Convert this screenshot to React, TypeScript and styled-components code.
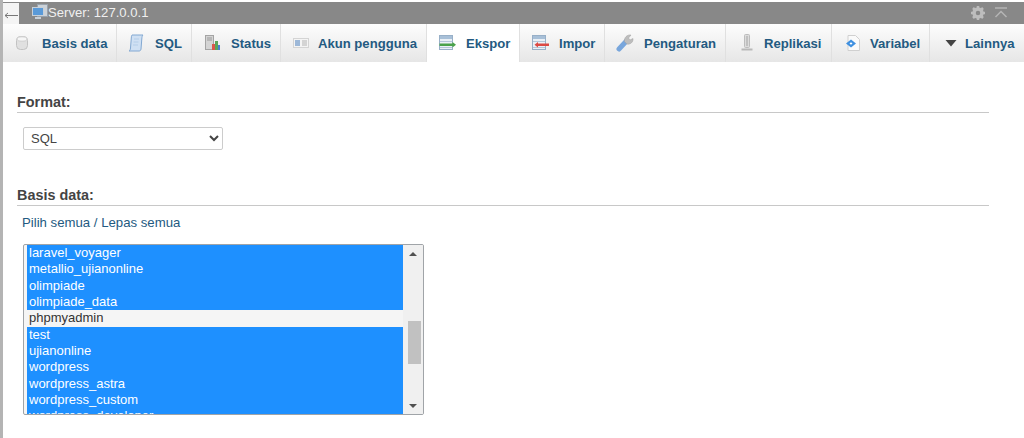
import React from "react";
import styled, { createGlobalStyle } from "styled-components";

const GlobalStyle = createGlobalStyle`
  html, body {
    margin: 0;
    padding: 0;
    background: #fff;
    overflow: hidden;
  }
  body {
    font-family: "Liberation Sans", Arial, sans-serif;
    color: #444;
  }
`;

const DbIcon = () => (
  <svg width="16" height="16" viewBox="0 0 16 16">
    <rect x="2.500" y="1.500" width="11" height="13" rx="4" fill="#e0e0e0" stroke="#c2c2c2" />
    <ellipse cx="8" cy="4" rx="5" ry="2.200" fill="#f6f6f6" stroke="#cfcfcf" />
  </svg>
);

const SqlIcon = () => (
  <svg width="18" height="18" viewBox="0 0 18 18">
    <path d="M5 1h11c-1 1-1 2-1.200 4L14 15c-.2 1.500-1 2-2 2H2c1-.5 1.400-1.500 1.500-3L4.300 4C4.400 2.500 4.500 1.800 5 1z" fill="#cfe0f3" stroke="#82a8d2" />
    <path d="M7 5h5M6.500 8h5M6 11h5" stroke="#b4cde8" />
  </svg>
);

const StatusIcon = () => (
  <svg width="18" height="18" viewBox="0 0 18 18">
    <rect x="2.500" y="1.500" width="8" height="14" fill="#d4d4d4" stroke="#a4a4a4" />
    <path d="M4 4h5M4 6h5" stroke="#9a9a9a" />
    <rect x="9" y="10" width="3" height="6" fill="#d8584c" />
    <rect x="12" y="7" width="3" height="9" fill="#5aa65a" />
    <rect x="15" y="11" width="2" height="5" fill="#4a7fd0" />
  </svg>
);

const UsersIcon = () => (
  <svg width="16" height="16" viewBox="0 0 16 16">
    <rect x="0.500" y="3.500" width="15" height="9" fill="#f4f4f4" stroke="#d4d4d4" />
    <rect x="2" y="5" width="5" height="6" fill="#9db8d8" />
    <path d="M9 6h5M9 8h5M9 10h5" stroke="#b4b4b4" />
  </svg>
);

const ExportIcon = () => (
  <svg width="18" height="16" viewBox="0 0 18 16">
    <rect x="1.500" y="0.500" width="13" height="14" fill="#eaf0f6" stroke="#98b0c8" />
    <rect x="2" y="1" width="12" height="3" fill="#a8c0d8" />
    <path d="M2 6.500h12M2 12.500h12" stroke="#b4c6d8" />
    <rect x="1.500" y="8.500" width="13.500" height="2.500" fill="#4aa24a" />
    <path d="M14.500 7l3.500 2.700-3.500 2.800z" fill="#4aa24a" />
  </svg>
);

const ImportIcon = () => (
  <svg width="18" height="16" viewBox="0 0 18 16">
    <rect x="1.500" y="0.500" width="13" height="14" fill="#eaf0f6" stroke="#98b0c8" />
    <rect x="2" y="1" width="12" height="3" fill="#a8c0d8" />
    <path d="M2 6.500h12M2 12.500h12" stroke="#b4c6d8" />
    <rect x="6" y="8.500" width="12" height="2.500" fill="#dc4a44" />
    <path d="M7 7l-3.500 2.700 3.500 2.800z" fill="#dc4a44" />
  </svg>
);

const WrenchIcon = () => (
  <svg width="18" height="18" viewBox="0 0 18 18">
    <path d="M3 15l7-7.500" stroke="#78a6dc" strokeWidth="5" strokeLinecap="round" />
    <path d="M8.500 7.500C8 3.500 11 .5 15 1l-2.500 3 1.500 2 3-1.500c.5 3.500-3 6.500-6 5.500z" fill="#bdbdbd" stroke="#a0a0a0" strokeWidth="0.500" />
  </svg>
);

const ReplicationIcon = () => (
  <svg width="14" height="18" viewBox="0 0 14 18">
    <rect x="4.500" y="0.500" width="5" height="13" rx="1" fill="#dcdcdc" stroke="#bcbcbc" />
    <path d="M7 2v10" stroke="#a4a4a4" />
    <path d="M1.500 15.500h11" stroke="#b8b8b8" strokeWidth="2" />
  </svg>
);

const VariableIcon = () => (
  <svg width="16" height="18" viewBox="0 0 16 18">
    <path d="M3 1.500h7.500l4 4v11H3z" fill="#fafafa" stroke="#d0d0d0" />
    <path d="M1 9.500L6 5.500l5 4-5 4z" fill="#3f90e0" />
    <path d="M4.500 9.500L6 8.200l1.500 1.300L6 10.800z" fill="#fff" />
  </svg>
);

const CaretIcon = () => (
  <svg width="12" height="8" viewBox="0 0 12 8">
    <path d="M0.500 1h11L6 7.500z" fill="#444" />
  </svg>
);

const tabs = [
  { label: "Basis data", icon: <DbIcon />, width: 114, gap: 12, pad: 11 },
  { label: "SQL", icon: <SqlIcon />, width: 75, gap: 10, pad: 10 },
  { label: "Status", icon: <StatusIcon />, width: 89, gap: 10, pad: 11 },
  { label: "Akun pengguna", icon: <UsersIcon />, width: 146, gap: 9, pad: 12 },
  { label: "Ekspor", icon: <ExportIcon />, width: 93, gap: 10, pad: 11, active: true },
  { label: "Impor", icon: <ImportIcon />, width: 85, gap: 10, pad: 11 },
  { label: "Pengaturan", icon: <WrenchIcon />, width: 121, gap: 10, pad: 11 },
  { label: "Replikasi", icon: <ReplicationIcon />, width: 106, gap: 10, pad: 14 },
  { label: "Variabel", icon: <VariableIcon />, width: 98, gap: 9, pad: 13 },
  { label: "Lainnya", icon: <CaretIcon />, width: 92, gap: 8, pad: 15 },
];

const databases = [
  "laravel_voyager",
  "metallio_ujianonline",
  "olimpiade",
  "olimpiade_data",
  "phpmyadmin",
  "test",
  "ujianonline",
  "wordpress",
  "wordpress_astra",
  "wordpress_custom",
  "wordpress_developer",
];

export default function App() {
  return (
    <Page>
      <GlobalStyle />
      <SideEdge />
      <Main>
        <TopBar>
          <BackButton>
            <svg width="14" height="7" viewBox="0 0 14 7">
              <path d="M1 3.500h13" stroke="#777" />
              <path d="M4 1L1 3.500 4 6" fill="none" stroke="#777" />
            </svg>
          </BackButton>
          <ServerLabel>
            <svg width="16" height="16" viewBox="0 0 16 16">
              <rect x="5.500" y="0.500" width="10" height="12" fill="#ccd2d8" stroke="#98a2ac" />
              <rect x="0.500" y="3.500" width="11" height="8" fill="#5a9ad8" stroke="#c8d0d8" />
              <rect x="3" y="13" width="6" height="2" fill="#c8d0d8" />
            </svg>
            <span>Server: 127.0.0.1</span>
          </ServerLabel>
          <TopIcons>
            <svg width="16" height="16" viewBox="0 0 16 16">
              <circle cx="8" cy="8" r="4" fill="none" stroke="#bdbdbd" strokeWidth="3.500" />
              <path
                d="M8 1v3M8 12v3M1 8h3M12 8h3M3 3l2 2M11 11l2 2M13 3l-2 2M5 11l-2 2"
                stroke="#bdbdbd"
                strokeWidth="2.500"
              />
            </svg>
            <svg width="14" height="14" viewBox="0 0 14 14">
              <path d="M1 2h12" stroke="#b5b5b5" strokeWidth="1.500" />
              <path d="M1.500 11L7 5.500l5.500 5.500" fill="none" stroke="#b5b5b5" strokeWidth="1.500" />
            </svg>
          </TopIcons>
        </TopBar>
        <TabBar>
          {tabs.map((tab) => (
            <Tab key={tab.label} $width={tab.width} $gap={tab.gap} $pad={tab.pad} $active={tab.active}>
              {tab.icon}
              <span>{tab.label}</span>
            </Tab>
          ))}
        </TabBar>
        <Content>
          <Section>
            <Heading>Format:</Heading>
            <FormatSelect defaultValue="SQL">
              <option>SQL</option>
            </FormatSelect>
          </Section>
          <Section>
            <Heading>Basis data:</Heading>
            <SelectLinks>Pilih semua / Lepas semua</SelectLinks>
            <ListBox>
              <Rows>
                {databases.map((db) => (
                  <Row key={db} $selected={db !== "phpmyadmin"}>
                    {db}
                  </Row>
                ))}
              </Rows>
              <ScrollTrack>
                <ArrowUp />
                <ThumbLane>
                  <Thumb />
                </ThumbLane>
                <ArrowDown />
              </ScrollTrack>
            </ListBox>
          </Section>
        </Content>
      </Main>
    </Page>
  );
}

const Page = styled.div`
  display: flex;
  width: 1024px;
  height: 438px;
  overflow: hidden;
  background: #fff;
`;

const SideEdge = styled.div`
  width: 3px;
  flex: none;
  background: #b4b4b4;
`;

const Main = styled.div`
  flex: 1;
  min-width: 0;
  padding-top: 2px;
`;

const TopBar = styled.div`
  display: flex;
  align-items: center;
  height: 22px;
  background: #888;
  color: #f0f0f0;
  font-size: 13.1px;
`;

const BackButton = styled.div`
  display: flex;
  align-items: flex-end;
  justify-content: center;
  box-sizing: border-box;
  width: 16px;
  height: 21px;
  margin-top: 1px;
  padding-bottom: 5px;
  background: #f4f4f4;
`;

const ServerLabel = styled.div`
  display: flex;
  align-items: center;
  margin-left: 13px;
  margin-top: -2px;
`;

const TopIcons = styled.div`
  display: flex;
  align-items: center;
  gap: 8px;
  margin-left: auto;
  margin-right: 16px;
`;

const TabBar = styled.div`
  display: flex;
  height: 38px;
  background: linear-gradient(#fdfdfd, #e6e6e6);
`;

const Tab = styled.div<{ $width: number; $gap: number; $pad: number; $active?: boolean }>`
  display: flex;
  align-items: center;
  flex: none;
  box-sizing: border-box;
  width: ${(p) => p.$width}px;
  gap: ${(p) => p.$gap}px;
  padding-left: ${(p) => p.$pad}px;
  border-right: 1px solid #e0e0e0;
  background: ${(p) => (p.$active ? "#fff" : "transparent")};
  color: #235a81;
  font-size: 13.1px;
  font-weight: bold;
  white-space: nowrap;
  &:last-child {
    border-right: none;
  }
`;

const Content = styled.div`
  padding: 33px 35px 0 14px;
`;

const Section = styled.section`
  margin-bottom: 38px;
`;

const Heading = styled.h2`
  margin: 0;
  height: 17px;
  border-bottom: 1px solid #c8c8c8;
  color: #444;
  font-size: 14.4px;
  font-weight: bold;
  line-height: 15px;
`;

const FormatSelect = styled.select`
  display: block;
  box-sizing: border-box;
  width: 200px;
  height: 23px;
  margin: 14px 0 0 6px;
  padding: 0 3px;
  border: 1px solid #ccc;
  border-radius: 2px;
  background: #fff;
  color: #444;
  font-family: inherit;
  font-size: 13px;
`;

const SelectLinks = styled.div`
  margin: 9px 0 0 5px;
  color: #235a81;
  font-size: 13.2px;
  line-height: 16px;
`;

const ListBox = styled.div`
  display: flex;
  box-sizing: border-box;
  width: 401px;
  height: 171px;
  margin: 13px 0 0 6px;
  border: 1px solid #a0a4a8;
  border-radius: 2px;
  overflow: hidden;
  background: #f5f5f5;
`;

const Rows = styled.div`
  flex: 1;
  padding-left: 3px;
`;

const Row = styled.div<{ $selected: boolean }>`
  height: 16.33px;
  padding-left: 2px;
  background: ${(p) => (p.$selected ? "#1e90ff" : "#f5f5f5")};
  color: ${(p) => (p.$selected ? "#fff" : "#333")};
  font-size: 13px;
  line-height: 16.33px;
  white-space: nowrap;
`;

const ScrollTrack = styled.div`
  display: flex;
  flex-direction: column;
  align-items: center;
  flex: none;
  width: 20px;
  background: #f0f0f0;
`;

const ArrowUp = styled.div`
  width: 0;
  height: 0;
  margin: 7px 0 4px;
  border-left: 4px solid transparent;
  border-right: 4px solid transparent;
  border-bottom: 4px solid #505050;
`;

const ArrowDown = styled.div`
  width: 0;
  height: 0;
  margin: 4px 0 6px;
  border-left: 4px solid transparent;
  border-right: 4px solid transparent;
  border-top: 4px solid #505050;
`;

const ThumbLane = styled.div`
  flex: 1;
  align-self: stretch;
  padding: 61px 2px 0 5px;
`;

const Thumb = styled.div`
  height: 43px;
  background: #c1c1c1;
`;
